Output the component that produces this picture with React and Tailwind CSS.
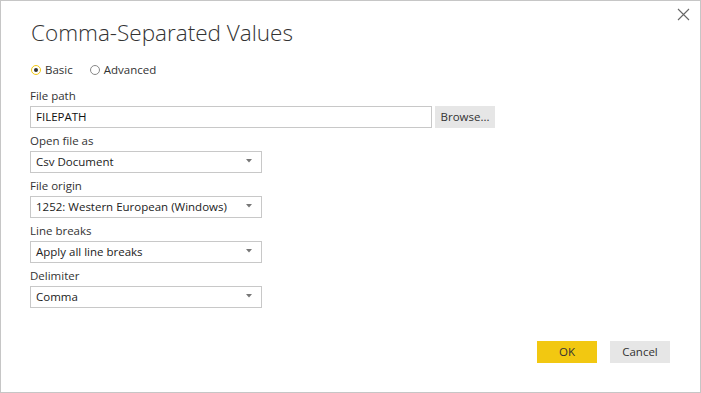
import React, { useState } from "react";

const font = { fontFamily: '"Open Sans", "Noto Sans", sans-serif' };

const Field = ({ label, children }) => (
  <div className="flex flex-col">
    <label className="text-[11.5px] leading-[16px] text-[#333] mb-[2px]">{label}</label>
    {children}
  </div>
);

const Select = ({ value }) => (
  <div className="w-[232px] h-[22px] border border-[#c8c8c8] bg-white flex items-center justify-between pl-[5px] pr-[9px]">
    <span className="text-[11.5px] leading-[16px] text-[#222]">{value}</span>
    <svg width="6" height="4" viewBox="0 0 6 4" className="-mt-[2px]">
      <path d="M0 0 H6 L3 3.5 Z" fill="#777" />
    </svg>
  </div>
);

const Radio = ({ checked, label, onClick }) => (
  <button onClick={onClick} className="flex items-center gap-[4px] text-[11.5px] leading-[16px] text-[#333]">
    <span
      className={`w-[10px] h-[10px] rounded-full border-[1.5px] flex items-center justify-center ${
        checked ? "border-[#f2c811]" : "border-[#888]"
      }`}
    >
      {checked && <span className="w-[4px] h-[4px] rounded-full bg-[#333]" />}
    </span>
    {label}
  </button>
);

export default function App() {
  const [mode, setMode] = useState("basic");

  return (
    <div style={font} className="w-[701px] h-[393px] bg-white border border-[#c6c6c6] flex flex-col">
      <div className="flex justify-between pl-[30px] pr-[10px] pt-[7px]">
        <h1 className="mt-[10px] text-[22.5px] leading-[30px] font-light text-[#333]">Comma-Separated Values</h1>
        <button className="w-[13px] h-[13px]">
          <svg width="13" height="13" viewBox="0 0 13 13">
            <path d="M1 1 L12 12 M12 1 L1 12" stroke="#666" strokeWidth="1.1" />
          </svg>
        </button>
      </div>

      <div className="flex flex-col px-[29px]">
        <div className="flex items-center gap-[17px] mt-[14px] pl-[1px]">
          <Radio checked={mode === "basic"} label="Basic" onClick={() => setMode("basic")} />
          <Radio checked={mode === "advanced"} label="Advanced" onClick={() => setMode("advanced")} />
        </div>

        <div className="flex flex-col gap-[5px] mt-[10px]">
          <Field label="File path">
            <div className="flex gap-[3px]">
              <div className="w-[402px] h-[22px] border border-[#c8c8c8] flex items-center pl-[5px]">
                <span className="text-[11.5px] leading-[16px] text-[#111]">FILEPATH</span>
              </div>
              <button className="w-[60px] h-[22px] bg-[#e6e6e6] text-[11.5px] text-[#333]">Browse...</button>
            </div>
          </Field>
          <Field label="Open file as">
            <Select value="Csv Document" />
          </Field>
          <Field label="File origin">
            <Select value="1252: Western European (Windows)" />
          </Field>
          <Field label="Line breaks">
            <Select value="Apply all line breaks" />
          </Field>
          <Field label="Delimiter">
            <Select value="Comma" />
          </Field>
        </div>
      </div>

      <div className="mt-auto flex justify-end gap-[13px] pr-[30px] pb-[29px]">
        <button className="w-[60px] h-[22px] bg-[#f2c811] text-[11.5px] text-[#333]">OK</button>
        <button className="w-[60px] h-[22px] bg-[#e6e6e6] text-[11.5px] text-[#333]">Cancel</button>
      </div>
    </div>
  );
}
